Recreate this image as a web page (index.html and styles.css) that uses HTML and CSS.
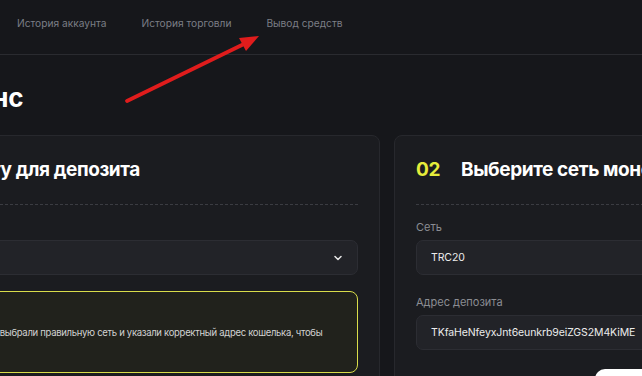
FILE: index.html
```html
<!DOCTYPE html>
<html lang="ru">
<head>
<meta charset="utf-8">
<title>Пополнить баланс</title>
<link rel="stylesheet" href="styles.css">
</head>
<body>
<nav class="tabs">
  <a class="tab">История аккаунта</a>
  <a class="tab">История торговли</a>
  <a class="tab">Вывод средств</a>
</nav>
<main class="page">
  <h1 class="title">Пополнить баланс</h1>
  <div class="cards">
    <section class="card">
      <h2 class="card-head"><span class="step">01</span>Выберите монету для депозита</h2>
      <hr class="dash">
      <label class="label">Монета</label>
      <div class="select">
        <span class="select-value">USDT</span>
        <svg class="chev" width="8" height="6" viewBox="0 0 8 6"><path d="M1 1.5 L4 4.5 L7 1.5" fill="none" stroke="#e6e6e6" stroke-width="1.5" stroke-linecap="round" stroke-linejoin="round"/></svg>
      </div>
      <div class="warn">
        <svg class="warn-icon" width="22" height="22" viewBox="0 0 22 22"><path d="M11 2 L21 20 H1 Z" fill="none" stroke="#e5ec3b" stroke-width="1.6" stroke-linejoin="round"/><path d="M11 8 V13" stroke="#e5ec3b" stroke-width="1.6" stroke-linecap="round"/><circle cx="11" cy="16.5" r="1" fill="#e5ec3b"/></svg>
        <div class="warn-body">
          <p class="warn-title">Внимание</p>
          <p class="warn-text">Пожалуйста, убедитесь, что вы выбрали правильную сеть и указали корректный адрес кошелька, чтобы<br>не потерять средства.</p>
        </div>
      </div>
    </section>
    <section class="card">
      <h2 class="card-head"><span class="step">02</span>Выберите сеть монеты</h2>
      <hr class="dash">
      <label class="label">Сеть</label>
      <div class="field">TRC20</div>
      <label class="label label-gap">Адрес депозита</label>
      <div class="field">TKfaHeNfeyxJnt6eunkrb9eiZGS2M4KiME</div>
      <div class="actions"><button class="btn">Копировать адрес</button></div>
    </section>
  </div>
</main>
<svg class="arrow" width="642" height="376" viewBox="0 0 642 376">
  <line x1="127" y1="101" x2="246" y2="43" stroke="#e01c1c" stroke-width="3.8" stroke-linecap="round"/>
  <polygon points="259,36 239,38 246,51" fill="#e01c1c"/>
</svg>
</body>
</html>
```

FILE: styles.css
```css
html, body {
  margin: 0;
  padding: 0;
}
body {
  background: #16171b;
  font-family: Inter, "Noto Sans", sans-serif;
  color: #ffffff;
  width: 642px;
  height: 376px;
  overflow: hidden;
  position: relative;
}
.tabs {
  display: flex;
  align-items: center;
  gap: 35px;
  height: 46px;
  padding: 0 0 8px 17px;
  border-bottom: 1px solid #2a2b30;
}
.tab {
  font-size: 10.2px;
  color: #7b7e86;
  white-space: nowrap;
}
.page {
  margin-left: -217px;
  width: 1300px;
}
.title {
  margin: 27px 0 21px 0;
  font-size: 26px;
  line-height: 32px;
  font-weight: 700;
  letter-spacing: -0.2px;
}
.cards {
  display: flex;
  gap: 14px;
}
.card {
  width: 553px;
  padding: 22px 21px;
  background: #1b1c20;
  border: 1px solid #27282d;
  border-radius: 8px;
  flex: none;
}
.card-head {
  margin: 0;
  font-size: 19px;
  line-height: 24px;
  font-weight: 700;
  letter-spacing: -0.4px;
  display: flex;
  white-space: nowrap;
}
.step {
  color: #e5ec3b;
  margin-right: 21px;
}
.dash {
  margin: 22px 0 0 0;
  border: 0;
  border-top: 1px dashed #3b3c42;
  height: 0;
}
.label {
  display: block;
  margin-top: 15px;
  font-size: 11px;
  line-height: 14px;
  color: #8b8d93;
}
.label-gap {
  margin-top: 20px;
}
.field, .select {
  margin-top: 6px;
  height: 33px;
  box-sizing: content-box;
  border: 1px solid #2c2d33;
  background: #222328;
  border-radius: 7px;
  display: flex;
  align-items: center;
  padding: 0 14px;
  font-size: 10.5px;
  letter-spacing: -0.1px;
  color: #ececec;
}
.select {
  justify-content: space-between;
  padding-right: 15px;
}
.chev {
  display: block;
}
.warn {
  margin-top: 16px;
  border: 1px solid #d9dd4a;
  background: #21221c;
  border-radius: 8px;
  padding: 15px 16px;
  display: flex;
  gap: 15px;
}
.warn-icon {
  flex: none;
  display: block;
}
.warn-title {
  margin: 0;
  font-size: 11px;
  line-height: 14px;
  font-weight: 600;
  color: #e5ec3b;
}
.warn-text {
  margin: 4px 0 0 0;
  font-size: 9.5px;
  line-height: 16px;
  letter-spacing: -0.3px;
  color: #d2d2d2;
  white-space: nowrap;
}
.actions {
  display: flex;
  justify-content: center;
  margin-top: 19px;
}
.btn {
  width: 195px;
  height: 40px;
  border: 0;
  border-radius: 10px;
  background: #ffffff;
  color: #111;
  font-family: inherit;
  font-size: 12px;
  font-weight: 600;
}
.arrow {
  position: absolute;
  left: 0;
  top: 0;
  pointer-events: none;
}
```
